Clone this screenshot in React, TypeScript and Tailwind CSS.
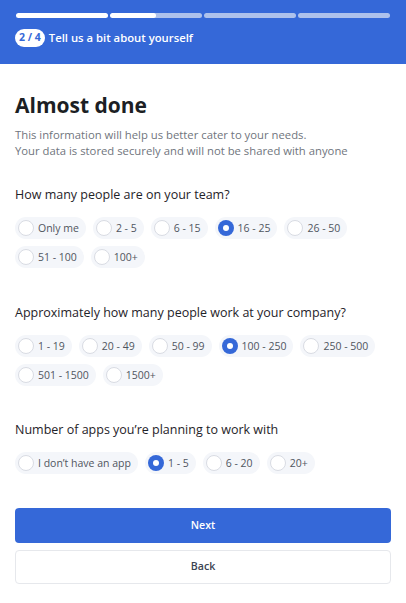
import React, { useState } from 'react';

const TEAM = ['Only me', '2 - 5', '6 - 15', '16 - 25', '26 - 50', '51 - 100', '100+'];
const COMPANY = ['1 - 19', '20 - 49', '50 - 99', '100 - 250', '250 - 500', '501 - 1500', '1500+'];
const APPS = ['I don\u2019t have an app', '1 - 5', '6 - 20', '20+'];

function Option({ label, checked, onClick }: { label: string; checked: boolean; onClick: () => void }) {
  return (
    <button
      type="button"
      onClick={onClick}
      className="flex h-[22px] items-center gap-[4px] rounded-full bg-[#f4f6fa] pl-[3px] pr-[7px] text-[10.5px] text-[#50555e]"
    >
      {checked ? (
        <span className="flex h-[16px] w-[16px] items-center justify-center rounded-full bg-[#3568d8]">
          <span className="h-[6px] w-[6px] rounded-full bg-white" />
        </span>
      ) : (
        <span className="h-[16px] w-[16px] rounded-full border border-[#d9dce3] bg-white" />
      )}
      <span className="leading-none">{label}</span>
    </button>
  );
}

function Question({
  title,
  options,
  value,
  onChange,
  className,
}: {
  title: string;
  options: string[];
  value: string;
  onChange: (v: string) => void;
  className?: string;
}) {
  return (
    <div className={className}>
      <p className="text-[12.5px] font-medium leading-[20px] text-[#1f2329]">{title}</p>
      <div className="mt-[12px] flex flex-wrap gap-[7px]">
        {options.map((o) => (
          <Option key={o} label={o} checked={o === value} onClick={() => onChange(o)} />
        ))}
      </div>
    </div>
  );
}

export default function App() {
  const [team, setTeam] = useState('16 - 25');
  const [company, setCompany] = useState('100 - 250');
  const [apps, setApps] = useState('1 - 5');

  return (
    <div className="min-h-screen bg-white font-['Open_Sans',sans-serif]">
      {/* Header */}
      <div className="h-[64px] bg-[#3568d8] px-[16px] pt-[13px]">
        <div className="flex gap-[2px]">
          <div className="h-[5px] flex-1 rounded-full bg-white" />
          <div className="flex h-[5px] flex-1 overflow-hidden rounded-full bg-[#adc1ec]">
            <div className="h-full w-1/2 rounded-full bg-white" />
          </div>
          <div className="h-[5px] flex-1 rounded-full bg-[#adc1ec]" />
          <div className="h-[5px] flex-1 rounded-full bg-[#adc1ec]" />
        </div>
        <div className="-ml-[1px] mt-[11px] flex items-center gap-[4px]">
          <span className="flex h-[18px] items-center rounded-full bg-white px-[4px] text-[10.5px] font-bold text-[#3568d8]">
            2 / 4
          </span>
          <span className="text-[11.3px] font-semibold text-white">Tell us a bit about yourself</span>
        </div>
      </div>

      {/* Body */}
      <div className="px-[15px]">
        <h1 className="mt-[27px] text-[21px] font-bold leading-[28px] text-[#1c1f24]">Almost done</h1>
        <p className="mt-[8px] text-[11.3px] leading-[16px] text-[#70757d]">
          This information will help us better cater to your needs.
          <br />
          Your data is stored securely and will not be shared with anyone
        </p>

        <Question className="mt-[26px]" title="How many people are on your team?" options={TEAM} value={team} onChange={setTeam} />
        <Question
          className="mt-[35px]"
          title="Approximately how many people work at your company?"
          options={COMPANY}
          value={company}
          onChange={setCompany}
        />
        <Question
          className="mt-[34px]"
          title="Number of apps you’re planning to work with"
          options={APPS}
          value={apps}
          onChange={setApps}
        />

        <button
          type="button"
          className="mt-[34px] flex h-[35px] w-full items-center justify-center rounded-[4px] bg-[#3568d8] text-[10.6px] font-semibold text-white"
        >
          Next
        </button>
        <button
          type="button"
          className="mt-[7px] flex h-[34px] w-full items-center justify-center rounded-[4px] border border-[#e6e8ec] bg-white text-[10.6px] font-semibold text-[#3b4452]"
        >
          Back
        </button>
      </div>
    </div>
  );
}
